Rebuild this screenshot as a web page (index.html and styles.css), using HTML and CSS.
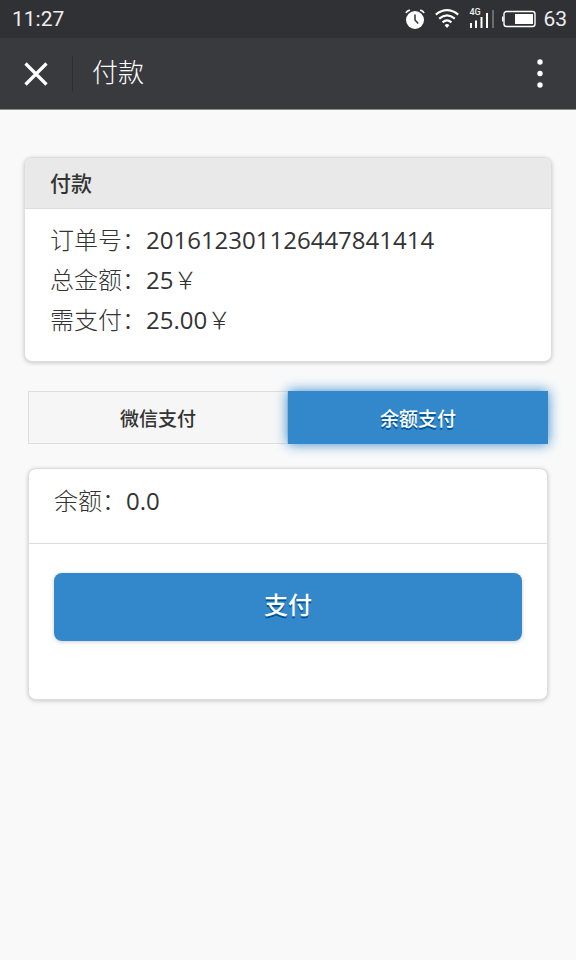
FILE: index.html
```html
<!DOCTYPE html>
<html lang="zh-CN">
<head>
  <meta charset="utf-8">
  <meta name="viewport" content="width=device-width, initial-scale=1">
  <title>付款</title>
  <link rel="stylesheet" href="styles.css">
</head>
<body>
  <div class="status-bar">
    <span class="clock">11:27</span>
    <svg class="icon-alarm" width="20" height="20" viewBox="0 0 20 20">
      <circle cx="10" cy="11" r="9" fill="#fff"/>
      <path d="M1 4 Q2 1.5 5 1.2M15 1.2 Q18 1.5 19 4" fill="none" stroke="#fff" stroke-width="1.6"/>
      <path d="M10 5.5V11l3.2 3.4" fill="none" stroke="#303134" stroke-width="1.5"/>
    </svg>
    <svg class="icon-wifi" width="24" height="20" viewBox="0 0 24 20">
      <g fill="none" stroke="#fff" stroke-width="2.1">
        <path d="M0.8 5.6Q12 -3.2 23.2 5.6"/>
        <path d="M4.2 9.6Q12 3 19.8 9.6"/>
        <path d="M7.6 13.4Q12 9.4 16.4 13.4"/>
      </g>
      <path d="M9.6 16.2Q12 13.6 14.4 16.2L12 19z" fill="#fff"/>
    </svg>
    <span class="signal">
      <svg width="26" height="18" viewBox="0 0 26 18">
        <path d="M2 13v5M7 10.500v7.500M12.500 7v11M18 3v15" stroke="#fff" stroke-width="2"/>
        <path d="M24 0v18" stroke="#6b6c6f" stroke-width="2"/>
      </svg>
      <span class="signal-type">4G</span>
    </span>
    <svg class="icon-battery" width="34" height="18" viewBox="0 0 34 18">
      <rect x="2" y="1.500" width="31" height="15" rx="2.500" fill="none" stroke="#fff" stroke-width="1.400"/>
      <path d="M0.700 6.500v5" stroke="#fff" stroke-width="1.400"/>
      <path d="M13 4h18v10H13z" fill="#fff"/>
    </svg>
    <span class="battery-level">63</span>
  </div>

  <header class="title-bar">
    <button class="icon-button close" type="button" aria-label="关闭">
      <svg width="24" height="24" viewBox="0 0 24 24">
        <path d="M1.500 1.500l21 21M22.500 1.500l-21 21" stroke="#fff" stroke-width="3.200"/>
      </svg>
    </button>
    <h1>付款</h1>
    <button class="icon-button more" type="button" aria-label="更多">
      <svg width="6" height="30" viewBox="0 0 6 30" fill="#fff">
        <circle cx="3" cy="3" r="2.700"/>
        <circle cx="3" cy="14.500" r="2.700"/>
        <circle cx="3" cy="26" r="2.700"/>
      </svg>
    </button>
  </header>

  <main>
    <section class="card order">
      <h2>付款</h2>
      <div class="order-body">
        <p>订单号：<span class="num">201612301126447841414</span></p>
        <p>总金额：<span class="num">25</span>￥</p>
        <p>需支付：<span class="num">25.00</span>￥</p>
      </div>
    </section>

    <div class="pay">
      <div class="tabs">
        <button class="tab" type="button">微信支付</button>
        <button class="tab active" type="button">余额支付</button>
      </div>

      <section class="card">
        <p class="balance">余额：<span class="num">0.0</span></p>
        <div class="pay-action">
          <button class="pay-button" type="button">支付</button>
        </div>
      </section>
    </div>
  </main>
</body>
</html>
```

FILE: styles.css
```css
* {
  box-sizing: border-box;
}
body {
  margin: 0;
  min-height: 100vh;
  background-color: #f9f9f9;
  color: #333;
  font-family: "Open Sans", "Noto Sans CJK SC", sans-serif;
  font-size: 24px;
  font-weight: 300;
}
h1, h2, p {
  margin: 0;
}
button {
  padding: 0;
  border: none;
  font-family: inherit;
  cursor: pointer;
}
svg {
  display: block;
}

/* phone status bar */
.status-bar {
  display: flex;
  align-items: center;
  height: 38px;
  padding: 0 9px 0 12px;
  background-color: #303134;
  color: #eee;
  font-family: Roboto, sans-serif;
  font-size: 21px;
  font-weight: 400;
}
.clock {
  margin-right: auto;
}
.icon-wifi {
  margin-left: 10px;
}
.signal {
  position: relative;
  margin-left: 10px;
}
.signal-type {
  position: absolute;
  top: -2px;
  left: 0;
  font-size: 9px;
  font-weight: 500;
  line-height: 9px;
}
.icon-battery {
  margin: 0 7px;
}

/* title bar */
.title-bar {
  display: flex;
  align-items: center;
  height: 72px;
  background-color: #393a3e;
  border-bottom: 1px solid #8d8d8f;
  color: #fff;
}
.title-bar h1 {
  flex: 1;
  padding: 0 0 4px 19px;
  border-left: 1px solid #2e2f32;
  font-size: 26px;
  font-weight: 300;
  line-height: 32px;
}
.icon-button {
  display: flex;
  align-items: center;
  justify-content: center;
  width: 72px;
  height: 71px;
  background: none;
}

main {
  padding: 47px 24px;
}
.card {
  background-color: #fff;
  border: 1px solid #ddd;
  border-radius: 8px;
  box-shadow: 0 1px 4px rgba(0, 0, 0, 0.2);
}
.order h2 {
  padding: 0 25px;
  background-color: #e9e9e9;
  border-bottom: 1px solid #ddd;
  border-radius: 7px 7px 0 0;
  font-size: 21px;
  font-weight: 500;
  line-height: 50px;
}
.order-body {
  padding: 11px 25px 21px;
  line-height: 40px;
}
.num {
  font-weight: 400;
}

.pay {
  padding: 29px 4px 0;
}
.tabs {
  display: flex;
  margin-bottom: 24px;
}
.tab {
  flex: 1;
  height: 53px;
  background-color: #f6f6f6;
  border: 1px solid #ddd;
  color: #333;
  font-size: 19px;
  font-weight: 500;
}
.tab.active {
  z-index: 1;
  background-color: #38c;
  border-color: #38c;
  box-shadow: 0 0 12px #38c;
  color: #fff;
  text-shadow: 0 2px 0 #059;
}

.balance {
  padding: 12px 25px 22px;
  border-bottom: 1px solid #ddd;
  line-height: 40px;
}
.pay-action {
  padding: 29px 25px 58px;
}
.pay-button {
  width: 100%;
  height: 68px;
  padding-bottom: 8px;
  background-color: #38c;
  border-radius: 8px;
  box-shadow: 0 1px 4px rgba(0, 0, 0, 0.2);
  color: #fff;
  font-size: 24px;
  font-weight: 500;
  text-shadow: 0 2px 0 #059;
}
```
